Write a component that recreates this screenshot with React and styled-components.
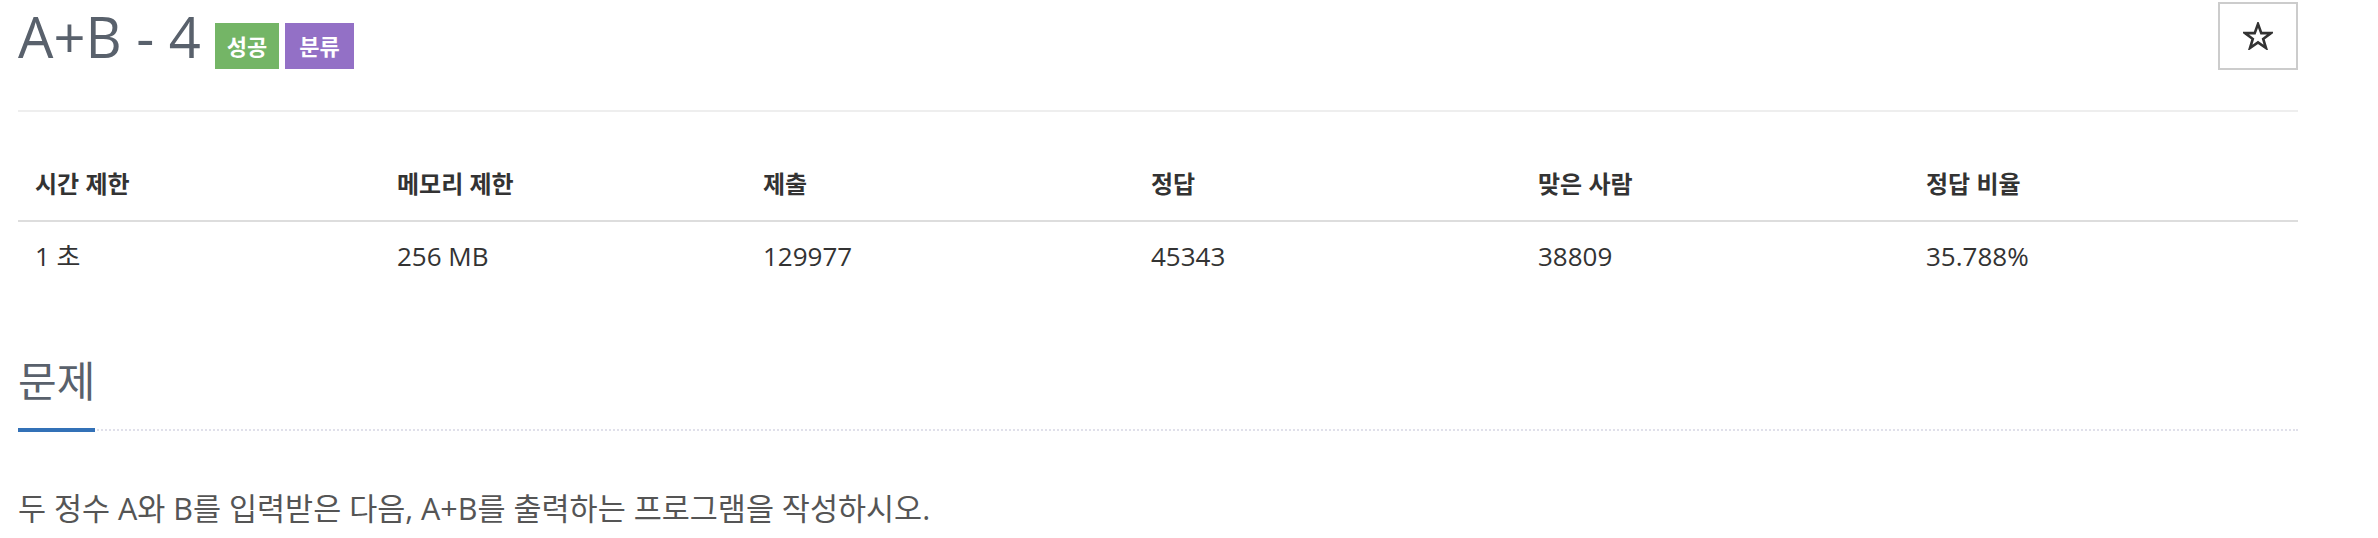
import React from "react";
import styled, { createGlobalStyle } from "styled-components";

const GlobalStyle = createGlobalStyle`
  body {
    margin: 0;
    background: #fff;
    font-family: "Open Sans", "Noto Sans CJK KR", sans-serif;
    color: #555;
  }
`;

const Page = styled.div`
  width: 2280px;
  padding-left: 18px;
`;

const Header = styled.div`
  display: flex;
  justify-content: space-between;
  align-items: flex-start;
  height: 110px;
  border-bottom: 2px solid #eee;
`;

const TitleRow = styled.div`
  display: flex;
  align-items: flex-end;
  padding-top: 3px;
`;

const Title = styled.h1`
  margin: 0;
  font-size: 56px;
  font-weight: 400;
  line-height: 66px;
  color: #59616c;
`;

const Badge = styled.span`
  display: inline-block;
  margin-left: ${(p) => (p.first ? "14px" : "6px")};
  padding: 0 ${(p) => p.pad}px;
  height: 46px;
  line-height: 46px;
  font-size: 22px;
  font-weight: 700;
  color: #fff;
  background: ${(p) => p.color};
`;

const StarButton = styled.button`
  display: flex;
  align-items: center;
  justify-content: center;
  width: 80px;
  height: 68px;
  margin-top: 2px;
  padding: 0;
  background: #fff;
  border: 2px solid #ccc;
  cursor: pointer;
`;

const Table = styled.table`
  width: 100%;
  border-collapse: collapse;
  table-layout: fixed;
`;

const Col = styled.col`
  width: ${(p) => p.width}px;
`;

const Th = styled.th`
  padding: 54px 17px 18px;
  text-align: left;
  font-size: 24px;
  font-weight: 700;
  line-height: 36px;
  color: #333;
  border-bottom: 2px solid #ddd;
`;

const Td = styled.td`
  padding: 16px 17px 30px;
  font-size: 26px;
  line-height: 36px;
  color: #333;
`;

const Section = styled.section`
  margin-top: 52px;
`;

const Headline = styled.div`
  border-bottom: 2px dotted #e0e0ea;
`;

const HeadlineTitle = styled.h2`
  display: inline-block;
  margin: 0 0 -3px;
  padding-bottom: 22px;
  font-size: 42px;
  font-weight: 400;
  line-height: 50px;
  color: #59616c;
  border-bottom: 4px solid #3371b7;
`;

const Description = styled.p`
  margin: 57px 0 0;
  font-size: 30.5px;
  line-height: 40px;
  color: #555;
`;

function StarIcon() {
  return (
    <svg width="30" height="28" viewBox="0 0 30 28">
      <polygon
        points="15,2 18.3,11.1 28,11.1 20.2,16.9 23,26 15,20.4 7,26 9.8,16.9 2,11.1 11.7,11.1"
        fill="none"
        stroke="#333"
        strokeWidth="2.6"
        strokeLinejoin="miter"
      />
    </svg>
  );
}

const columns = [
  { label: "시간 제한", value: "1 초", width: 362 },
  { label: "메모리 제한", value: "256 MB", width: 366 },
  { label: "제출", value: "129977", width: 388 },
  { label: "정답", value: "45343", width: 387 },
  { label: "맞은 사람", value: "38809", width: 388 },
  { label: "정답 비율", value: "35.788%", width: 389 },
];

export default function App() {
  return (
    <>
      <GlobalStyle />
      <Page>
        <Header>
          <TitleRow>
            <Title>A+B - 4</Title>
            <Badge first pad={12} color="#74b566">성공</Badge>
            <Badge pad={14} color="#9370c6">분류</Badge>
          </TitleRow>
          <StarButton>
            <StarIcon />
          </StarButton>
        </Header>

        <Table>
          <colgroup>
            {columns.map((c) => (
              <Col key={c.label} width={c.width} />
            ))}
          </colgroup>
          <thead>
            <tr>
              {columns.map((c) => (
                <Th key={c.label}>{c.label}</Th>
              ))}
            </tr>
          </thead>
          <tbody>
            <tr>
              {columns.map((c) => (
                <Td key={c.label}>{c.value}</Td>
              ))}
            </tr>
          </tbody>
        </Table>

        <Section>
          <Headline>
            <HeadlineTitle>문제</HeadlineTitle>
          </Headline>
          <Description>
            두 정수 A와 B를 입력받은 다음, A+B를 출력하는 프로그램을 작성하시오.
          </Description>
        </Section>
      </Page>
    </>
  );
}
